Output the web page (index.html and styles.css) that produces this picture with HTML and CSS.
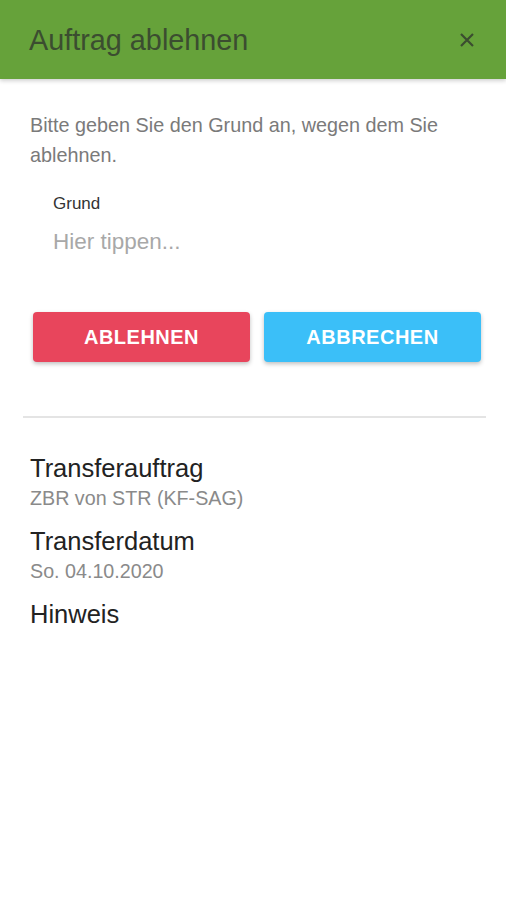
FILE: index.html
```html
<!DOCTYPE html>
<html lang="de">
<head>
<meta charset="utf-8">
<link rel="stylesheet" href="styles.css">
</head>
<body>
<header class="topbar">
  <h1 class="title">Auftrag ablehnen</h1>
  <svg class="close" width="14" height="14" viewBox="0 0 14 14" aria-label="Schließen">
    <path d="M1 1 L13 13 M13 1 L1 13" stroke="#3b4d30" stroke-width="2.2" stroke-linecap="butt" fill="none"/>
  </svg>
</header>
<main class="content">
  <p class="intro">Bitte geben Sie den Grund an, wegen dem Sie ablehnen.</p>
  <div class="field">
    <label class="label">Grund</label>
    <div class="placeholder">Hier tippen...</div>
  </div>
  <div class="actions">
    <button class="btn btn-red">ABLEHNEN</button>
    <button class="btn btn-blue">ABBRECHEN</button>
  </div>
  <hr class="divider">
  <section class="details">
    <div class="item">
      <div class="heading">Transferauftrag</div>
      <div class="value">ZBR von STR (KF-SAG)</div>
    </div>
    <div class="item">
      <div class="heading">Transferdatum</div>
      <div class="value">So. 04.10.2020</div>
    </div>
    <div class="item">
      <div class="heading">Hinweis</div>
    </div>
  </section>
</main>
</body>
</html>
```
FILE: styles.css
```css
* { box-sizing: border-box; }
html, body { margin: 0; padding: 0; background: #fff; }
body { font-family: "Liberation Sans", Arial, sans-serif; width: 506px; height: 900px; overflow: hidden; }
.topbar {
  height: 79px;
  background: #66a23a;
  display: flex;
  align-items: center;
  justify-content: space-between;
  padding: 0 32px 0 29px;
  box-shadow: 0 2px 4px rgba(0,0,0,0.18);
}
.title { margin: 0; font-weight: normal; font-size: 28.8px; line-height: 34px; color: #3b4d30; }
.close { display: block; }
.content { padding: 0 20px 0 23px; }
.intro { margin: 31px 7px 0 7px; font-size: 19.8px; line-height: 30px; color: #7a7a7a; padding-right: 10px; }
.field { padding: 24px 30px 0 30px; }
.label { display: block; font-size: 17px; line-height: 20px; color: #333; }
.placeholder { margin-top: 15px; font-size: 22.5px; line-height: 26px; color: #a8a8a8; }
.actions { display: flex; gap: 14px; padding: 0 5px 0 10px; margin-top: 57px; }
.btn {
  flex: 1;
  height: 50px;
  border: none;
  border-radius: 4px;
  color: #fff;
  font-family: "Liberation Sans", Arial, sans-serif;
  font-weight: bold;
  font-size: 20px;
  letter-spacing: 0.5px;
  box-shadow: 0 2px 4px rgba(0,0,0,0.25);
}
.btn-red { background: #e8455c; }
.btn-blue { background: #3bbff8; }
.divider { border: none; border-top: 2px solid #e4e4e4; margin: 54px 0 0 0; }
.details { padding: 35px 7px 0 7px; }
.item { margin-bottom: 15px; }
.heading { font-size: 25.5px; color: #222; line-height: 30px; }
.value { font-size: 19.7px; color: #8a8a8a; line-height: 26px; margin-top: 2px; }
```
